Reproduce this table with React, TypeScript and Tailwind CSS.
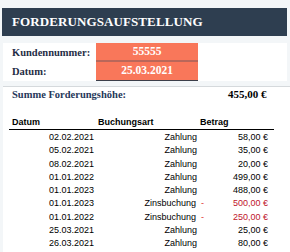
interface Buchung {
  datum: string;
  art: string;
  betrag: string;
  zins?: boolean;
}

const buchungen: Buchung[] = [
  { datum: "02.02.2021", art: "Zahlung", betrag: "58,00 €" },
  { datum: "05.02.2021", art: "Zahlung", betrag: "35,00 €" },
  { datum: "08.02.2021", art: "Zahlung", betrag: "20,00 €" },
  { datum: "01.01.2022", art: "Zahlung", betrag: "499,00 €" },
  { datum: "01.01.2023", art: "Zahlung", betrag: "488,00 €" },
  { datum: "01.01.2023", art: "Zinsbuchung", betrag: "500,00 €", zins: true },
  { datum: "01.01.2022", art: "Zinsbuchung", betrag: "250,00 €", zins: true },
  { datum: "25.03.2021", art: "Zahlung", betrag: "25,00 €" },
  { datum: "26.03.2021", art: "Zahlung", betrag: "80,00 €" },
];

const serif = "font-['Liberation_Serif',serif]";

export default function App() {
  return (
    <div className="w-[290px] h-[252px] overflow-hidden bg-[#f3f6f8] pt-[8px]">
      {/* title bar */}
      <div
        className={`ml-[2px] w-[285px] h-[28px] bg-[#2e3e50] flex items-center pl-[10px] text-[13px] font-bold tracking-[0.1px] text-white ${serif}`}
      >
        FORDERUNGSAUFSTELLUNG
      </div>

      {/* customer info */}
      <div className={`mt-[7px] ml-[3px] w-[284px] h-[38px] bg-white flex ${serif}`}>
        <div className="w-[93px] flex flex-col text-[10.5px] font-bold text-[#1f2d45] pl-[9px]">
          <div className="h-[19px] flex items-center">Kundennummer:</div>
          <div className="h-[19px] flex items-center">Datum:</div>
        </div>
        <div className="w-[102px] flex flex-col bg-[#f9775a] text-white font-bold text-[11.5px] border-b border-[#3c3f4a]">
          <div className="h-[19px] flex items-center justify-center border-b-2 border-[#b9675a]">
            55555
          </div>
          <div className="flex-1 flex items-center justify-center">25.03.2021</div>
        </div>
      </div>

      {/* body */}
      <div className="mt-[5px] ml-[3px] h-[200px] bg-white border-t border-[#d5d9dc]">
        <div className={`flex items-center h-[15px] pl-[9px] ${serif}`}>
          <span className="w-[216px] text-[10.5px] font-bold text-[#26385a]">
            Summe Forderungshöhe:
          </span>
          <span className="text-[11px] font-bold text-black">455,00 €</span>
        </div>

        <div className="ml-[6px] mt-[14px] w-[265px] font-['Liberation_Sans',sans-serif] text-[9px] text-black">
          <div className="grid grid-cols-[86px_103px_76px] h-[14px] items-end pb-[1px] font-bold border-b border-black">
            <span className="pl-[3px]">Datum</span>
            <span className="pl-[3px]">Buchungsart</span>
            <span className="pl-[2px]">Betrag</span>
          </div>
          <div className="pt-[1px]">
            {buchungen.map((b, i) => (
              <div
                key={i}
                className="grid grid-cols-[86px_103px_76px] h-[13.25px] items-center"
              >
                <span className="text-right pr-[1px]">{b.datum}</span>
                <span className="text-right pr-[1px] flex justify-end">
                  {b.zins ? (
                    <>
                      <span>{b.art}</span>
                      <span className="text-[#e0322f] ml-[5px] -mr-[7px]">-</span>
                    </>
                  ) : (
                    b.art
                  )}
                </span>
                <span
                  className={`text-right pr-[6px] ${b.zins ? "text-[#c0142b]" : ""}`}
                >
                  {b.betrag}
                </span>
              </div>
            ))}
          </div>
        </div>
      </div>
    </div>
  );
}
